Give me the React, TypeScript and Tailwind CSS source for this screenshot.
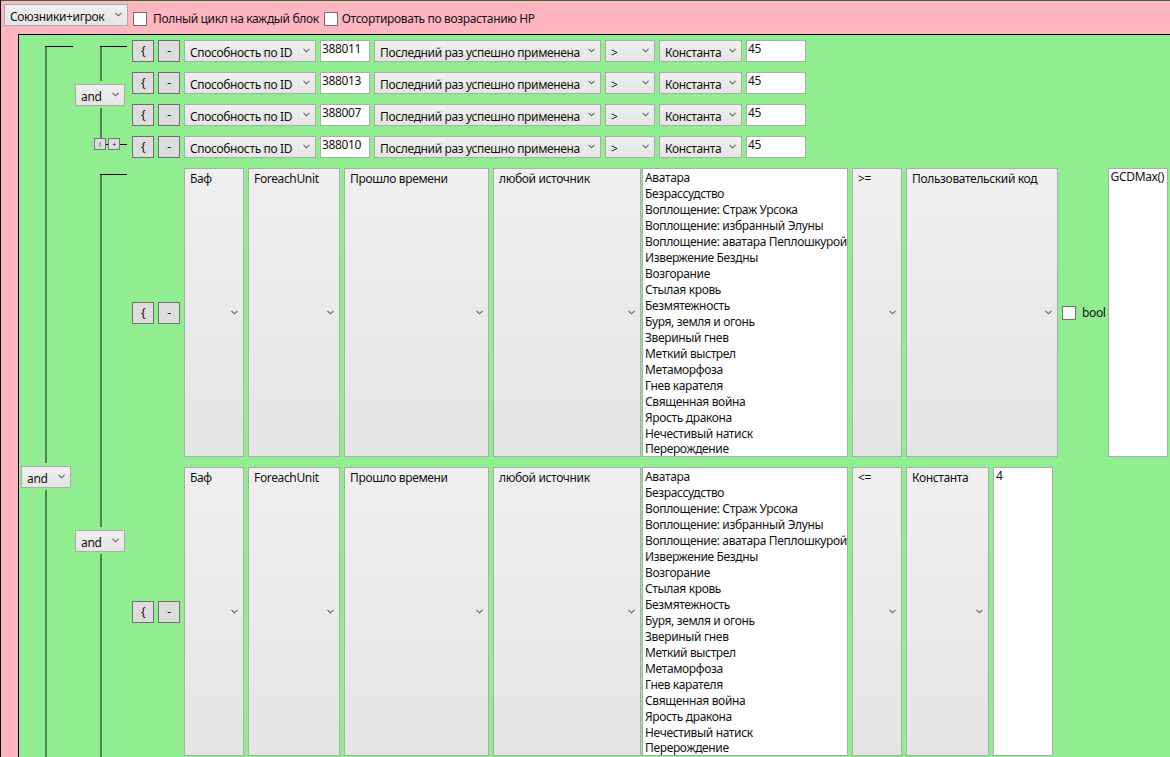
import React from 'react';

const AURAS = [
  'Аватара',
  'Безрассудство',
  'Воплощение: Страж Урсока',
  'Воплощение: избранный Элуны',
  'Воплощение: аватара Пеплошкурой',
  'Извержение Бездны',
  'Возгорание',
  'Стылая кровь',
  'Безмятежность',
  'Буря, земля и огонь',
  'Звериный гнев',
  'Меткий выстрел',
  'Метаморфоза',
  'Гнев карателя',
  'Священная война',
  'Ярость дракона',
  'Нечестивый натиск',
  'Перерождение',
];

const IDS = ['388011', '388013', '388007', '388010'];

const Chevron = () => (
  <svg width="7" height="5" viewBox="0 0 7 5" className="shrink-0" fill="none" stroke="#606060" strokeWidth="1.1">
    <path d="M0.5 0.8 L3.5 3.8 L6.5 0.8" />
  </svg>
);

// combobox: 22px high in normal rows, stretched in the tall ones
const Combo = ({ label, className, tall }: { label: string; className: string; tall?: boolean }) => (
  <button className={`relative block shrink-0 border border-[#acacac] bg-gradient-to-b from-[#f0f0f0] to-[#e5e5e5] text-left ${className}`}>
    <span className={`absolute left-[5px] whitespace-nowrap leading-[16px] ${tall ? 'top-[2px]' : 'top-[4px]'}`}>{label}</span>
    <span className={`absolute right-[5px] flex ${tall ? 'top-1/2 -mt-[3px]' : 'top-[7px]'}`}>
      <Chevron />
    </span>
  </button>
);

const SquareBtn = ({ label }: { label: string }) => (
  <button className="h-[22px] w-[22px] shrink-0 border border-[#707070] bg-[#dddddd] text-center leading-[18px]">{label}</button>
);

const ConditionRow = ({ id }: { id: string }) => (
  <div className="mb-[10px] flex h-[22px] items-stretch">
    <SquareBtn label="{" />
    <div className="ml-[4px]">
      <SquareBtn label="-" />
    </div>
    <Combo label="Способность по ID" className="ml-[4px] w-[132px]" />
    <input
      readOnly
      value={id}
      className="ml-[4px] w-[50px] border border-[#acacac] bg-white px-[1px] pb-[4px] leading-[16px] outline-none"
    />
    <Combo label="Последний раз успешно применена" className="ml-[4px] w-[227px]" />
    <Combo label=">" className="ml-[4px] w-[50px]" />
    <Combo label="Константа" className="ml-[4px] w-[83px]" />
    <input
      readOnly
      value="45"
      className="ml-[4px] w-[60px] border border-[#acacac] bg-white px-[1px] pb-[4px] leading-[16px] outline-none"
    />
  </div>
);

const AuraList = () => (
  <div className="ml-px w-[206px] shrink-0 overflow-hidden border border-[#acacac] bg-white pl-[2px] pt-[1px]">
    {AURAS.map((a) => (
      <div key={a} className="h-[15.97px] whitespace-nowrap leading-[16px]">
        {a}
      </div>
    ))}
  </div>
);

const AuraRow = ({ children }: { children: React.ReactNode }) => (
  <div className="mb-[10px] flex h-[289px] items-stretch">
    <div className="flex items-center">
      <SquareBtn label="{" />
      <div className="ml-[4px]">
        <SquareBtn label="-" />
      </div>
    </div>
    <Combo tall label="Баф" className="ml-[4px] w-[60px]" />
    <Combo tall label="ForeachUnit" className="ml-[4px] w-[92px]" />
    <Combo tall label="Прошло времени" className="ml-[4px] w-[145px]" />
    <Combo tall label="любой источник" className="ml-[4px] w-[148px]" />
    <AuraList />
    {children}
  </div>
);

const Line = ({ className }: { className: string }) => <div className={`w-[2px] bg-[#4f854f] ${className}`} />;

const App: React.FC = () => {
  return (
    <div className="h-[757px] w-[1170px] overflow-hidden border-l border-t border-l-black border-t-[#2e6b2e] bg-[#ffb6c1] pl-[1px] font-['Noto_Sans','Open_Sans',sans-serif] text-[12px] tracking-[-0.35px] text-[#111]">
      {/* Top options */}
      <div className="flex h-[33px] items-start pl-[2px] pt-[3px]">
        <Combo label="Союзники+игрок" className="h-[22px] w-[124px]" />
        <label className="ml-[5px] mt-[8px] flex items-center">
          <input type="checkbox" className="h-[14px] w-[14px] appearance-none border border-[#707070] bg-white" />
          <span className="ml-[6px] leading-[14px]">Полный цикл на каждый блок</span>
        </label>
        <label className="ml-[5px] mt-[8px] flex items-center">
          <input type="checkbox" className="h-[14px] w-[14px] appearance-none border border-[#707070] bg-white" />
          <span className="ml-[4px] leading-[14px]">Отсортировать по возрастанию HP</span>
        </label>
      </div>

      {/* Green block */}
      <div className="ml-[16px] flex w-[1200px] border-l border-t border-black bg-[#90ee90] pt-[5px]">
        {/* outer and */}
        <div className="flex w-[54px] shrink-0 flex-col pt-[6px]">
          <div className="ml-[26px] h-px w-[28px] bg-black" />
          <Line className="ml-[26px] h-[416px]" />
          <Combo label="and" className="ml-[2px] mt-[3px] h-[22px] w-[50px]" />
          <Line className="ml-[26px] mt-[2px] h-[420px]" />
        </div>

        <div className="min-w-0 flex-1">
          {/* first and-group */}
          <div className="flex">
            <div className="flex w-[59px] shrink-0 flex-col pt-[6px]">
              <div className="ml-[27px] h-px w-[27px] bg-black" />
              <Line className="ml-[27px] h-[34px]" />
              <Combo label="and" className="ml-[2px] mt-[3px] h-[22px] w-[50px]" />
              <Line className="ml-[27px] mt-[2px] h-[30px]" />
              <div className="ml-[21px] flex items-center">
                <button className="h-[12px] w-[12px] border border-[#777] bg-[#dddddd] text-center text-[6px] leading-[9px]">(</button>
                <div className="h-px w-[2px] bg-black" />
                <button className="h-[12px] w-[12px] border border-[#777] bg-[#dddddd] text-center text-[7px] leading-[9px]">+</button>
                <div className="h-px w-[7px] bg-black" />
              </div>
            </div>
            <div>
              {IDS.map((id) => (
                <ConditionRow key={id} id={id} />
              ))}
            </div>
          </div>

          {/* second and-group */}
          <div className="flex">
            <div className="flex w-[59px] shrink-0 flex-col pt-[6px]">
              <div className="ml-[27px] h-px w-[27px] bg-black" />
              <Line className="ml-[27px] h-[352px]" />
              <Combo label="and" className="ml-[2px] mt-[3px] h-[22px] w-[50px]" />
              <Line className="ml-[27px] mt-[2px] h-[354px]" />
            </div>
            <div>
              <AuraRow>
                <Combo tall label=">=" className="ml-[4px] w-[50px]" />
                <Combo tall label="Пользовательский код" className="ml-[4px] w-[152px]" />
                <label className="ml-[4px] flex items-center">
                  <input type="checkbox" className="h-[14px] w-[14px] appearance-none border border-[#707070] bg-white" />
                  <span className="ml-[6px]">bool</span>
                </label>
                <textarea
                  readOnly
                  value="GCDMax()"
                  className="ml-[2px] w-[60px] resize-none overflow-hidden whitespace-nowrap border border-[#acacac] bg-white px-[2px] leading-[16px] outline-none"
                />
              </AuraRow>
              <AuraRow>
                <Combo tall label="<=" className="ml-[4px] w-[50px]" />
                <Combo tall label="Константа" className="ml-[4px] w-[83px]" />
                <textarea
                  readOnly
                  value="4"
                  className="ml-[4px] w-[60px] resize-none overflow-hidden border border-[#acacac] bg-white px-[2px] leading-[16px] outline-none"
                />
              </AuraRow>
            </div>
          </div>
        </div>
      </div>
    </div>
  );
};

export default App;
